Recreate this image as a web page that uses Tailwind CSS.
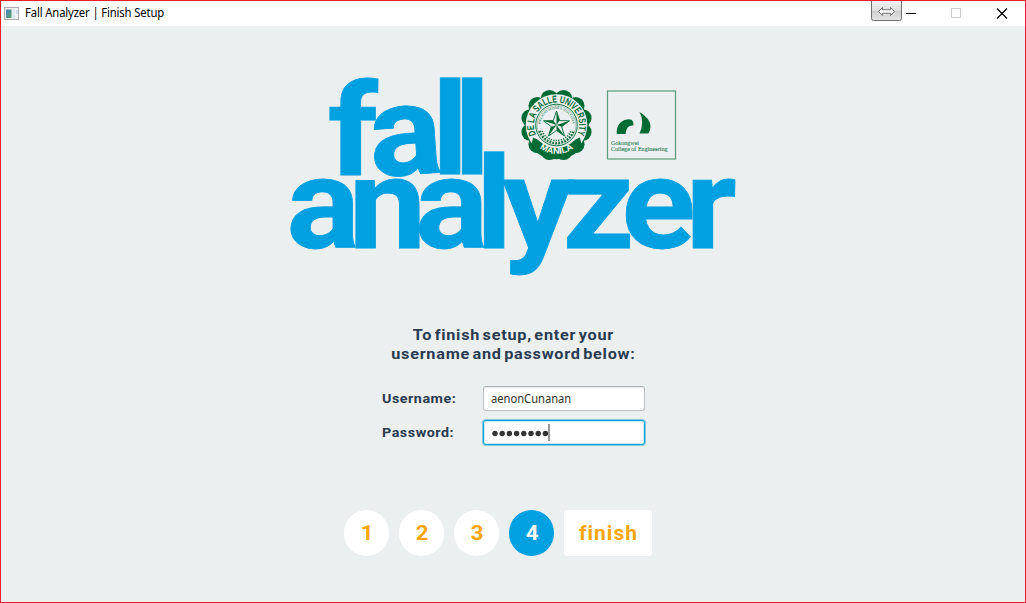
<!DOCTYPE html>
<html lang="en">
<head>
<meta charset="utf-8">
<title>Fall Analyzer | Finish Setup</title>
<script src="https://cdn.jsdelivr.net/npm/@tailwindcss/browser@4"></script>
</head>
<body class="w-[1026px] h-[603px] overflow-hidden">
<div class="relative flex flex-col w-full h-full border border-[#e81e2f] bg-[#ebeff0]">
  <header class="flex items-center h-[25px] shrink-0 bg-white">
    <svg class="ml-[3px] shrink-0" width="16" height="14" viewBox="0 0 16 14">
      <defs><linearGradient id="ic" x1="0" y1="0" x2="1" y2="1"><stop offset="0" stop-color="#4f7fc0"/><stop offset="1" stop-color="#4fa668"/></linearGradient></defs>
      <rect x=".5" y=".5" width="14" height="12" fill="#f2f2f2" stroke="#a9abad"/>
      <rect x="2" y="2.500" width="5.500" height="8.500" fill="url(#ic)"/>
      <rect x="8" y="2.500" width="3" height="8.500" fill="#dce9ee"/>
      <rect x="12" y="3" width="1.500" height="4" fill="#c8d6e6"/>
    </svg>
    <span class="ml-[5px] -mt-[2px] origin-left scale-x-[0.94] text-[12px] leading-none whitespace-nowrap text-black tracking-[-0.15px] font-['Noto_Sans','Open_Sans',sans-serif]">Fall Analyzer | Finish Setup</span>
    <svg class="ml-auto shrink-0" width="154" height="25" viewBox="871 1 154 25">
      <defs><linearGradient id="gb" x1="0" y1="0" x2="0" y2="1"><stop offset="0" stop-color="#f4f4f4"/><stop offset=".5" stop-color="#dedede"/><stop offset=".55" stop-color="#cfcfcf"/><stop offset="1" stop-color="#e4e4e4"/></linearGradient></defs>
      <path d="M871.500 0V18.500Q871.500 20.500 873.500 20.500H899.500Q901.500 20.500 901.500 18.500V0Z" fill="url(#gb)" stroke="#6f6f6f"/>
      <path d="M878.500 11.500L882.500 7.500V9.800H890.500V7.500L894.500 11.500L890.500 15.500V13.200H882.500V15.500Z" fill="#fff" stroke="#666" stroke-width=".9"/>
      <path d="M906 13.500H916" stroke="#000"/>
      <rect x="951.500" y="8.500" width="9" height="9" fill="none" stroke="#ccc"/>
      <path d="M997 8.500L1007 18.500M1007 8.500L997 18.500" stroke="#000" stroke-width="1.200"/>
    </svg>
  </header>
  <main class="flex flex-col items-center pt-[44px]">
    <svg width="460" height="210" viewBox="283 70 460 210" role="img" aria-label="fall analyzer">
      <g fill="#00a0e1" stroke="#00a0e1" stroke-width=".8" class="font-['Roboto',sans-serif] font-bold text-[128px]">
        <text transform="translate(328 174.500) scale(1.090 1)">f</text>
        <text transform="translate(369 175) rotate(-4 34 -34) scale(1.070 1)">a</text>
        <text transform="translate(431.800 174) scale(1.080 1)">l</text>
        <text transform="translate(453.800 174) scale(1.080 1)">l</text>
        <text transform="translate(286.500 247.500) scale(1.070 1)">a</text>
        <text transform="translate(348.700 247.500) scale(1.080 1)">n</text>
        <text transform="translate(415 247.500) scale(1.070 1)">a</text>
        <text transform="translate(475.800 247.500) scale(1.080 1)">l</text>
        <text transform="translate(502.300 247.500) scale(1.100 1)">y</text>
        <text transform="translate(562.500 247.500) scale(1.100 1)">z</text>
        <text transform="translate(621.500 247.500) scale(1.070 1)">e</text>
        <text transform="translate(685.500 247.500) scale(1.090 1)">r</text>
      </g>
      <g transform="translate(556.500 125)">
        <g fill="#006b35" id="scallops"></g>
        <circle r="31.500" fill="#006b35"/>
        <circle r="30.800" fill="#ebeff0"/>
        <circle r="20.800" fill="none" stroke="#006b35" stroke-width=".9"/>
        <circle r="19.400" fill="none" stroke="#006b35" stroke-width=".3"/>
        <defs>
          <path id="ring" d="M-19 12.300A22.600 22.600 0 1 1 19 12.300"/>
          <path id="inner" d="M-15.300 5A16.100 16.100 0 1 1 15.300 5"/>
          <path id="base" d="M-21.500 19.300A28.900 28.900 0 0 0 21.500 19.300"/>
        </defs>
        <text class="font-['Liberation_Sans',sans-serif] font-bold text-[10px]" fill="#006b35"><textPath href="#ring" startOffset="3" textLength="90" lengthAdjust="spacingAndGlyphs">DE LA SALLE UNIVERSITY</textPath></text>
        <text class="font-['Liberation_Sans',sans-serif] text-[3.200px]" fill="#006b35"><textPath href="#inner" startOffset="6" textLength="48" lengthAdjust="spacingAndGlyphs">RELIGIO MORES CULTURA</textPath></text>
        <path d="M-17 6A18 18 0 0 0 17 6" fill="none" stroke="#006b35" stroke-width="2.400" stroke-dasharray="1.700 1.300"/>
        <path d="M-14.500 6A15.800 15.800 0 0 0 14.500 6" fill="none" stroke="#006b35" stroke-width="1.500" stroke-dasharray="1.200 1.300"/>
        <path d="M-23.500 12.500Q-19 14 -16.500 16.500A23.500 23.500 0 0 0 16.500 16.500Q19 14 23.500 12.500L25 20L21 27A34 34 0 0 1 -21 27L-25 20Z" fill="#006b35"/>
        <text class="font-['Liberation_Sans',sans-serif] font-bold text-[8.500px]" fill="#fff"><textPath href="#base" startOffset="50%" text-anchor="middle" textLength="36" lengthAdjust="spacingAndGlyphs">MANILA</textPath></text>
        <path d="M0 -14L3.200 -4.400L13 -4.200L5.200 1.700L8 11L0 5.500L-8 11L-5.200 1.700L-13 -4.200L-3.200 -4.400Z" fill="#ebeff0" stroke="#006b35" stroke-width=".9"/>
        <path d="M0 0V-14L3.200 -4.400ZM0 0L13 -4.200L5.200 1.700ZM0 0L8 11L0 5.500ZM0 0L-8 11L-5.200 1.700ZM0 0L-13 -4.200L-3.200 -4.400Z" fill="#006b35"/>
      </g>
      <rect x="607.500" y="91" width="68" height="68" fill="none" stroke="#5b9b7c" stroke-width="1.200"/>
      <path d="M616.800 134Q616 127 620.500 122.500Q625.500 118 631.500 119.700Q634 122 633.300 125.500Q629.500 125 627.500 127.800Q625.800 130 625.500 134Z" fill="#006b35"/>
      <path d="M639.500 112Q650.500 118.500 650.500 126.500Q650.500 130 648.500 133.500H639.500Q645 122 639.500 112Z" fill="#006b35"/>
      <g class="font-['Liberation_Serif',serif] text-[6.500px]" fill="#287f54" stroke="#287f54" stroke-width=".1">
        <text x="611" y="144.700" textLength="28" lengthAdjust="spacingAndGlyphs">Gokongwei</text>
        <text x="611" y="151.200" textLength="56.500" lengthAdjust="spacingAndGlyphs">College of Engineering</text>
      </g>
    </svg>
    <h1 class="mt-[46px] scale-x-[1.05] text-center text-[15.500px] leading-[19px] font-bold text-[#2a3b50] tracking-[0.7px] [word-spacing:-2.200px] font-['Roboto',sans-serif]">To finish setup, enter your<br>username and password below:</h1>
    <form class="mt-[22px] ml-px grid grid-cols-[101px_162px] gap-y-[9px] items-center font-['Roboto',sans-serif] text-[#2a3b50]">
      <span class="origin-left scale-x-[1.06] text-[13.500px] leading-none font-bold tracking-[0.5px]">Username:</span>
      <div class="flex items-center h-[25px] rounded-[3px] border border-[#bcbfc0] border-t-[#b0b3b4] bg-white shadow-[inset_0_1px_1px_#e6e6e6] pl-[7px] text-[12px] text-[#333] font-['Noto_Sans',sans-serif]"><span class="origin-left scale-x-[0.93]">aenonCunanan</span></div>
      <span class="origin-left scale-x-[1.06] text-[13.500px] leading-none font-bold tracking-[0.5px]">Password:</span>
      <div class="flex items-center h-[25px] rounded-[3px] border border-[#039ed3] bg-white shadow-[0_0_0_1px_#7dcbe6,inset_0_0_0_1px_#cfeaf4] pl-[7px]">
        <svg width="60" height="17" viewBox="0 0 60 17"><g fill="#333"><circle cx="4" cy="9.500" r="2.700"/><circle cx="11.200" cy="9.500" r="2.700"/><circle cx="18.400" cy="9.500" r="2.700"/><circle cx="25.600" cy="9.500" r="2.700"/><circle cx="32.800" cy="9.500" r="2.700"/><circle cx="40" cy="9.500" r="2.700"/><circle cx="47.200" cy="9.500" r="2.700"/><circle cx="54.400" cy="9.500" r="2.700"/></g><path d="M58 0V17" stroke="#999" stroke-width="2"/></svg>
      </div>
    </form>
    <nav class="mt-[65px] -ml-[30px] flex gap-[10px] font-['Roboto',sans-serif] font-bold text-[21px] leading-none text-[#ffa500]">
      <span class="flex items-center justify-center w-[45px] h-[46px] rounded-full bg-white"><span class="ml-px scale-x-[1.06]">1</span></span>
      <span class="flex items-center justify-center w-[45px] h-[46px] rounded-full bg-white"><span class="ml-px scale-x-[1.06]">2</span></span>
      <span class="flex items-center justify-center w-[45px] h-[46px] rounded-full bg-white"><span class="ml-px scale-x-[1.06]">3</span></span>
      <span class="flex items-center justify-center w-[45px] h-[46px] rounded-full bg-[#00a0e1] text-white"><span class="ml-px scale-x-[1.06]">4</span></span>
      <span class="flex items-center justify-center w-[88px] h-[46px] rounded-[3px] bg-white tracking-[1px] pl-px">finish</span>
    </nav>
  </main>
</div>
<script>
  const group = document.getElementById('scallops');
  for (let i = 0; i < 12; i++) {
    const a = (15 + i * 30) * Math.PI / 180;
    const c = document.createElementNS('http://www.w3.org/2000/svg', 'circle');
    c.setAttribute('cx', 27.2 * Math.cos(a));
    c.setAttribute('cy', 27.2 * Math.sin(a));
    c.setAttribute('r', 8.8);
    group.appendChild(c);
  }
</script>
</body>
</html>
